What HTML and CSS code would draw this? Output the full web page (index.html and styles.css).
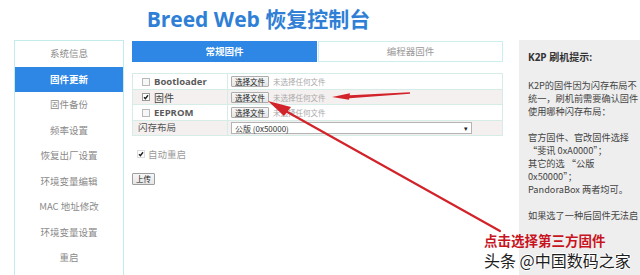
FILE: index.html
```html
<!DOCTYPE html>
<html lang="zh-CN">
<head>
<meta charset="utf-8">
<title>Breed Web 恢复控制台</title>
<link rel="stylesheet" href="styles.css">
</head>
<body>
<div class="page">
  <div class="left">
    <h1 class="title">Breed Web 恢复控制台</h1>
    <div class="content">
      <ul class="nav">
        <li>系统信息</li>
        <li class="active">固件更新</li>
        <li>固件备份</li>
        <li>频率设置</li>
        <li>恢复出厂设置</li>
        <li>环境变量编辑</li>
        <li>MAC 地址修改</li>
        <li>环境变量设置</li>
        <li>重启</li>
      </ul>
      <div class="main">
        <div class="tabs">
          <div class="tab on">常规固件</div>
          <div class="tab">编程器固件</div>
        </div>
        <table class="fw">
          <tr>
            <td class="lbl"><span class="cb"></span><span class="name">Bootloader</span></td>
            <td class="val"><span class="btn">选择文件</span><span class="none">未选择任何文件</span></td>
          </tr>
          <tr class="alt">
            <td class="lbl"><span class="cb on"><svg viewBox="0 0 6 6" width="6" height="6"><path d="M1 3.2 L2.4 4.6 L5 1.2" fill="none" stroke="#222" stroke-width="1.4"/></svg></span><span class="name cn">固件</span></td>
            <td class="val"><span class="btn">选择文件</span><span class="none">未选择任何文件</span></td>
          </tr>
          <tr>
            <td class="lbl"><span class="cb"></span><span class="name">EEPROM</span></td>
            <td class="val"><span class="btn">选择文件</span><span class="none">未选择任何文件</span></td>
          </tr>
          <tr class="alt">
            <td class="lbl plain">闪存布局</td>
            <td class="val"><span class="select"><span>公版 (0x50000)</span><span class="caret">▾</span></span></td>
          </tr>
        </table>
        <div class="auto"><span class="cb on"><svg viewBox="0 0 6 6" width="6" height="6"><path d="M1 3.2 L2.4 4.6 L5 1.2" fill="none" stroke="#222" stroke-width="1.4"/></svg></span><span>自动重启</span></div>
        <div class="upload"><span class="btn">上传</span></div>
      </div>
    </div>
  </div>
  <aside class="tips">
    <h2>K2P 刷机提示:</h2>
    <p>K2P的固件因为闪存布局不<br>统一，刷机前需要确认固件<br>使用哪种闪存布局：<br><br>官方固件、官改固件选择<br>“斐讯 0xA0000”；<br>其它的选 “公版<br>0x50000”；<br>PandoraBox 两者均可。<br><br>如果选了一种后固件无法启</p>
  </aside>
</div>
<svg class="arrows" width="640" height="275" viewBox="0 0 640 275">
  <path d="M410 92.2 L345 95.6 L346 98.4 L410 93.8 Z" fill="#d2232a"/>
  <path d="M332 97 L350 93.2 L349 99.8 Z" fill="#d2232a"/>
  <line x1="500" y1="231" x2="282" y2="109" stroke="#d2232a" stroke-width="2.2" stroke-linecap="round"/>
  <path d="M268 101 L291 107 L284 116 Z" fill="#d2232a"/>
</svg>
<div class="note">点击选择第三方固件</div>
<div class="mark">头条 @中国数码之家</div>
</body>
</html>
```
FILE: styles.css
```css
body {
  margin: 0;
  width: 640px;
  height: 275px;
  overflow: hidden;
  position: relative;
  background: #fff;
  font-family: "Noto Sans CJK SC", "Noto Sans", sans-serif;
}

.page {
  display: flex;
  padding-left: 14px;
}

.left {
  width: 489px;
  flex: none;
}

.title {
  margin: 0;
  height: 40px;
  line-height: 38px;
  text-align: center;
  font-family: "Open Sans", "Noto Sans CJK SC", sans-serif;
  font-size: 21px;
  font-weight: bold;
  color: #2f7fd6;
}

.content {
  display: flex;
  gap: 8px;
}

.nav {
  list-style: none;
  margin: 0;
  padding: 0;
  width: 110px;
  height: 260px;
  box-sizing: border-box;
  border: 1px solid #c4ecec;
  flex: none;
}

.nav li {
  height: 25.5px;
  line-height: 25.5px;
  text-align: center;
  font-size: 9.5px;
  color: #8a8a8a;
}

.nav li.active {
  background: #2e87e5;
  color: #fff;
  font-weight: bold;
}

.main {
  width: 371px;
  flex: none;
}

.tabs {
  display: flex;
  gap: 1px;
  height: 21px;
  margin-top: 1px;
}

.tab {
  flex: 1;
  box-sizing: border-box;
  border: 1px solid #cbeeee;
  text-align: center;
  line-height: 19px;
  font-size: 9.5px;
  color: #999;
}

.tab.on {
  background: #2e87e5;
  border-color: #2e87e5;
  color: #fff;
  font-weight: bold;
}

.fw {
  margin-top: 11px;
  width: 371px;
  border-collapse: collapse;
}

.fw td {
  border: 1px solid #d5ece7;
  padding: 0;
  height: 14.5px;
  line-height: 11px;
  vertical-align: middle;
}

.fw tr.alt td {
  background: #f4f0ef;
}

.lbl {
  width: 95px;
  box-sizing: border-box;
  padding-left: 9px !important;
  font-size: 9.5px;
  color: #555;
  white-space: nowrap;
}

.lbl.plain {
  padding-left: 5px !important;
  font-size: 9.5px;
  color: #555;
}

.name {
  font-family: "Open Sans", "Noto Sans CJK SC", sans-serif;
  font-weight: bold;
  font-size: 9.5px;
  color: #5a5a5a;
  margin-left: 4px;
  vertical-align: middle;
}

.name.cn {
  font-family: "Noto Sans CJK SC", sans-serif;
  font-weight: normal;
  font-size: 10px;
  color: #444;
}

.cb {
  display: inline-flex;
  align-items: center;
  justify-content: center;
  width: 6px;
  height: 6px;
  border: 1px solid #b9b9b9;
  background: #f7f7f7;
  vertical-align: middle;
}

.cb.on {
  border-color: #999;
  background: #fff;
}

.cb svg {
  display: block;
}

.val {
  padding-left: 3px !important;
  white-space: nowrap;
  font-size: 7.5px;
}

.btn {
  display: inline-block;
  box-sizing: border-box;
  height: 11px;
  line-height: 9px;
  padding: 0 3px;
  border: 1px solid #adadad;
  border-radius: 1px;
  background: linear-gradient(#f7f7f7, #e6e6e6);
  font-size: 7.5px;
  color: #222;
  vertical-align: middle;
}

.val .btn {
  width: 38px;
  text-align: center;
}

.none {
  margin-left: 4px;
  color: #aaa;
  font-size: 7.5px;
  vertical-align: middle;
}

.select {
  display: inline-flex;
  justify-content: space-between;
  align-items: center;
  box-sizing: border-box;
  width: 241px;
  height: 12px;
  padding: 0 3px 0 3px;
  border: 1px solid #b4b4b4;
  background: #fff;
  font-size: 8px;
  color: #333;
  vertical-align: middle;
}

.caret {
  font-size: 7px;
  color: #222;
}

.auto {
  display: flex;
  align-items: center;
  gap: 3px;
  margin-top: 12px;
  padding-left: 5px;
  height: 12px;
  font-size: 9.5px;
  color: #9a9a9a;
}

.auto .cb {
  border-color: #ddd;
}

.upload {
  margin-top: 10px;
  line-height: 12px;
}

.upload .btn {
  width: 23px;
  height: 12px;
  line-height: 10px;
  padding: 0;
  text-align: center;
  border-color: #9e9e9e;
}

.tips {
  margin-left: 16px;
  margin-top: 40px;
  width: 200px;
  height: 300px;
  flex: none;
  background: #eeeeee;
  padding: 9px 0 0 9px;
  box-sizing: border-box;
}

.tips h2 {
  margin: 0;
  font-family: "Open Sans", "Noto Sans CJK SC", sans-serif;
  font-size: 10px;
  font-weight: bold;
  line-height: 16px;
  color: #333;
}

.tips p {
  margin: 14px 0 0;
  font-size: 9.2px;
  line-height: 13px;
  color: #444;
  white-space: nowrap;
}

.arrows {
  position: absolute;
  left: 0;
  top: 0;
  pointer-events: none;
}

.note {
  position: absolute;
  left: 484px;
  top: 233px;
  font-size: 13.5px;
  line-height: 15px;
  font-weight: bold;
  color: #c8141e;
  white-space: nowrap;
}

.mark {
  position: absolute;
  left: 484px;
  top: 251px;
  font-size: 16px;
  line-height: 18px;
  color: #1e1e1e;
  white-space: nowrap;
  text-shadow: 1px 0 0 #fff, -1px 0 0 #fff, 0 1px 0 #fff, 0 -1px 0 #fff;
}
```
